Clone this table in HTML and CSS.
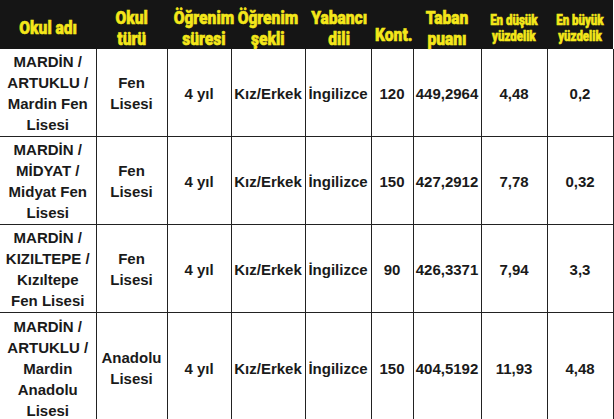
FILE: index.html
```html
<!DOCTYPE html>
<html lang="tr">
<head>
<meta charset="utf-8">
<link rel="stylesheet" href="styles.css">
</head>
<body>
<table class="schools">
  <colgroup>
    <col class="w-name"><col class="w-type"><col class="w-dur"><col class="w-kind"><col class="w-lang"><col class="w-kont"><col class="w-score"><col class="w-min"><col class="w-max">
  </colgroup>
  <thead>
    <tr>
      <th><span class="h">Okul adı</span></th>
      <th><span class="h">Okul<br>türü</span></th>
      <th><span class="h">Öğrenim<br>süresi</span></th>
      <th><span class="h">Öğrenim<br>şekli</span></th>
      <th><span class="h">Yabancı<br>dili</span></th>
      <th class="low"><span class="h">Kont.</span></th>
      <th><span class="h">Taban<br>puanı</span></th>
      <th class="small"><span class="h">En düşük<br>yüzdelik</span></th>
      <th class="small"><span class="h">En büyük<br>yüzdelik</span></th>
    </tr>
  </thead>
  <tbody>
    <tr class="r4">
      <td>MARDİN /<br>ARTUKLU /<br>Mardin Fen<br>Lisesi</td>
      <td>Fen<br>Lisesi</td>
      <td>4 yıl</td>
      <td>Kız/Erkek</td>
      <td>İngilizce</td>
      <td>120</td>
      <td>449,2964</td>
      <td>4,48</td>
      <td>0,2</td>
    </tr>
    <tr class="r4b">
      <td>MARDİN /<br>MİDYAT /<br>Midyat Fen<br>Lisesi</td>
      <td>Fen<br>Lisesi</td>
      <td>4 yıl</td>
      <td>Kız/Erkek</td>
      <td>İngilizce</td>
      <td>150</td>
      <td>427,2912</td>
      <td>7,78</td>
      <td>0,32</td>
    </tr>
    <tr class="r4b">
      <td>MARDİN /<br>KIZILTEPE /<br>Kızıltepe<br>Fen Lisesi</td>
      <td>Fen<br>Lisesi</td>
      <td>4 yıl</td>
      <td>Kız/Erkek</td>
      <td>İngilizce</td>
      <td>90</td>
      <td>426,3371</td>
      <td>7,94</td>
      <td>3,3</td>
    </tr>
    <tr class="r5">
      <td>MARDİN /<br>ARTUKLU /<br>Mardin<br>Anadolu<br>Lisesi</td>
      <td>Anadolu<br>Lisesi</td>
      <td>4 yıl</td>
      <td>Kız/Erkek</td>
      <td>İngilizce</td>
      <td>150</td>
      <td>404,5192</td>
      <td>11,93</td>
      <td>4,48</td>
    </tr>
  </tbody>
</table>
</body>
</html>
```

FILE: styles.css
```css
html, body {
  margin: 0;
  padding: 0;
  background: #ffffff;
}

.schools {
  border-collapse: collapse;
  table-layout: fixed;
  width: 613px;
  font-family: "Liberation Sans", Arial, sans-serif;
}

.w-name { width: 96px; }
.w-type { width: 71px; }
.w-dur { width: 64px; }
.w-kind { width: 74px; }
.w-lang { width: 66px; }
.w-kont { width: 42px; }
.w-score { width: 68px; }
.w-min { width: 66px; }
.w-max { width: 66px; }

thead tr {
  height: 49px;
}

thead th {
  background: #151515;
  color: #f4e71a;
  padding: 6px 0 0;
  font-family: Roboto, "Liberation Sans", sans-serif;
  font-weight: 900;
  font-size: 19px;
  line-height: 21px;
  text-align: center;
  vertical-align: middle;
  white-space: nowrap;
  border: 0;
}

thead th.small {
  font-size: 14px;
  line-height: 16px;
}

thead th.low {
  vertical-align: bottom;
  padding-bottom: 4px;
}

.h {
  display: inline-block;
  transform: scaleX(0.82);
  -webkit-text-stroke: 0.6px #f4e71a;
}

tbody td {
  border: 1px solid #222222;
  color: #1a1a1a;
  font-weight: bold;
  font-size: 15px;
  line-height: 21px;
  text-align: center;
  vertical-align: middle;
  padding: 2px 2px 0;
  white-space: nowrap;
}

tbody td:first-child {
  border-left: 0;
}

tbody tr:first-child td {
  border-top: 0;
}

.r4 { height: 87px; }
.r4b { height: 88px; }
.r5 { height: 110px; }
```
